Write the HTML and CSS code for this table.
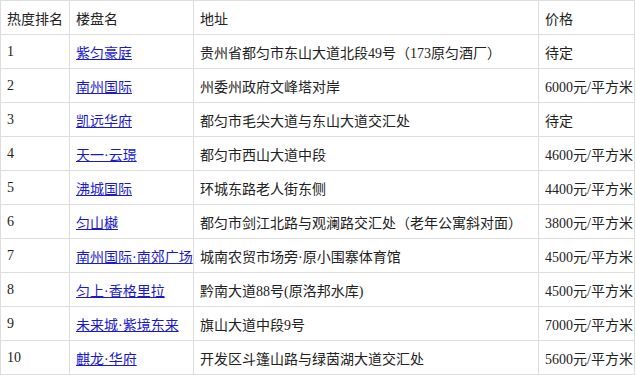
FILE: index.html
```html
<!DOCTYPE html>
<html lang="zh">
<head>
<meta charset="utf-8">
<link rel="stylesheet" href="styles.css">
</head>
<body>
<table class="rank">
<colgroup>
<col class="c1"><col class="c2"><col class="c3"><col class="c4">
</colgroup>
<tr><td>热度排名</td><td>楼盘名</td><td>地址</td><td>价格</td></tr>
<tr><td>1</td><td><a href="#">紫匀豪庭</a></td><td>贵州省都匀市东山大道北段49号（173原匀酒厂）</td><td>待定</td></tr>
<tr><td>2</td><td><a href="#">南州国际</a></td><td>州委州政府文峰塔对岸</td><td>6000元/平方米</td></tr>
<tr><td>3</td><td><a href="#">凯远华府</a></td><td>都匀市毛尖大道与东山大道交汇处</td><td>待定</td></tr>
<tr><td>4</td><td><a href="#">天一·云璟</a></td><td>都匀市西山大道中段</td><td>4600元/平方米</td></tr>
<tr><td>5</td><td><a href="#">沸城国际</a></td><td>环城东路老人街东侧</td><td>4400元/平方米</td></tr>
<tr><td>6</td><td><a href="#">匀山樾</a></td><td>都匀市剑江北路与观澜路交汇处（老年公寓斜对面）</td><td>3800元/平方米</td></tr>
<tr><td>7</td><td><a href="#">南州国际·南郊广场</a></td><td>城南农贸市场旁·原小围寨体育馆</td><td>4500元/平方米</td></tr>
<tr><td>8</td><td><a href="#">匀上·香格里拉</a></td><td>黔南大道88号(原洛邦水库)</td><td>4500元/平方米</td></tr>
<tr><td>9</td><td><a href="#">未来城·紫境东来</a></td><td>旗山大道中段9号</td><td>7000元/平方米</td></tr>
<tr><td>10</td><td><a href="#">麒龙·华府</a></td><td>开发区斗篷山路与绿茵湖大道交汇处</td><td>5600元/平方米</td></tr>
</table>
</body>
</html>
```
FILE: styles.css
```css
html, body {
  margin: 0;
  padding: 0;
  background: #fff;
}
.rank {
  border-collapse: collapse;
  width: 634px;
  table-layout: fixed;
  font-family: "Liberation Serif", "Noto Sans CJK SC", serif;
  font-size: 14px;
  color: #222;
}
.c1 { width: 69px; }
.c2 { width: 124px; }
.c3 { width: 345px; }
.c4 { width: 96px; }
.rank td {
  border: 1px solid #ddd;
  height: 34px;
  padding: 0 6px;
  box-sizing: border-box;
  white-space: nowrap;
  overflow: hidden;
}
.rank a {
  color: #1a1acc;
  text-decoration: underline;
}
```
